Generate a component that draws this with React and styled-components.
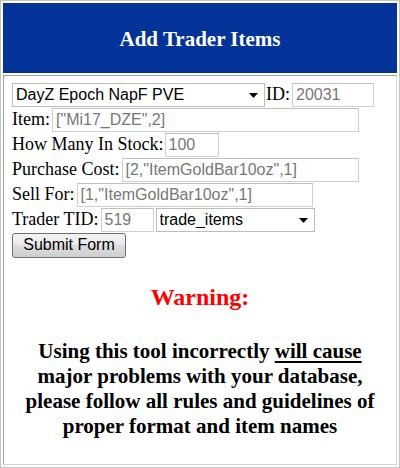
import React from 'react';
import styled, { createGlobalStyle } from 'styled-components';

const GlobalStyle = createGlobalStyle`
  html, body {
    margin: 0;
    padding: 0;
    background: #fff;
  }
  body {
    font-family: 'Liberation Serif', 'Times New Roman', serif;
  }
`;

const Table = styled('div')`
  width: 400px;
  height: 468px;
  box-sizing: border-box;
  border: 1px solid #c4c4c4;
  padding: 2px;
  display: flex;
  flex-direction: column;
  gap: 2px;
`;

const HeaderCell = styled('div')`
  height: 70px;
  background: #033399;
  color: #fff;
  display: flex;
  align-items: center;
  justify-content: center;
  font-weight: bold;
  font-size: 21px;
  padding-top: 3px;
  box-sizing: border-box;
`;

const BodyCell = styled('div')`
  flex: 1;
  border: 1px solid #9c9c9c;
  border-right-color: #d4d4d4;
  border-bottom-color: #d4d4d4;
  padding: 6px 8px 0 8px;
  display: flex;
  flex-direction: column;
`;

const Row = styled('div')`
  height: 25px;
  display: flex;
  align-items: center;
  font-size: 18px;
  color: #000;
  white-space: nowrap;
`;

const Label = styled('span')`
  margin-right: ${(p) => p.gap || 2}px;
`;

const Input = styled('input')`
  width: ${(p) => p.w}px;
  height: 24px;
  box-sizing: border-box;
  border: 1px solid #d0d0d0;
  border-top-color: #c0c0c0;
  padding: 0 3px;
  margin: 0;
  font-family: 'Liberation Sans', Arial, sans-serif;
  font-size: 16px;
  color: #000;
  background: #fff;
  outline: none;

  &::placeholder {
    color: #777;
    opacity: 1;
  }
`;

const SelectWrap = styled('div')`
  position: relative;
  width: ${(p) => p.w}px;
  height: 24px;
  margin-right: ${(p) => p.mr || 0}px;

  svg {
    position: absolute;
    right: 7px;
    top: 10px;
    pointer-events: none;
  }
`;

const Select = styled('select')`
  appearance: none;
  -webkit-appearance: none;
  width: 100%;
  height: 100%;
  box-sizing: border-box;
  border: 1px solid #bdbdbd;
  border-radius: 0;
  background: #fff;
  padding: 0 3px;
  margin: 0;
  font-family: 'Liberation Sans', Arial, sans-serif;
  font-size: 16px;
  color: #000;
  outline: none;
`;

const Button = styled('button')`
  width: 114px;
  height: 25px;
  margin-top: 1px;
  box-sizing: border-box;
  border: 1px solid #707070;
  border-radius: 3px;
  background: linear-gradient(#f2f2f2 0%, #ebebeb 45%, #dddddd 50%, #cfcfcf 100%);
  font-family: 'Liberation Sans', Arial, sans-serif;
  font-size: 16px;
  color: #000;
  padding: 0;
`;

const Warning = styled('div')`
  margin-top: 26px;
  text-align: center;
  color: #f00;
  font-weight: bold;
  font-size: 24px;
  line-height: 28px;
`;

const Notice = styled('div')`
  margin-top: 28px;
  text-align: center;
  font-weight: bold;
  font-size: 21px;
  line-height: 25px;
  color: #000;

  u {
    text-decoration-thickness: 2px;
    text-underline-offset: 3px;
  }
`;

const Arrow = () => (
  <svg width="9" height="5" viewBox="0 0 9 5">
    <path d="M0 0 H9 L4.5 5 Z" fill="#000" />
  </svg>
);

export default function App() {
  return (
    <>
      <GlobalStyle />
      <Table>
        <HeaderCell>Add Trader Items</HeaderCell>
        <BodyCell>
          <Row>
            <SelectWrap w={253} mr={1}>
              <Select defaultValue="napf">
                <option value="napf">DayZ Epoch NapF PVE</option>
              </Select>
              <Arrow />
            </SelectWrap>
            <Label gap={2}>ID:</Label>
            <Input w={82} placeholder="20031" />
          </Row>
          <Row>
            <Label gap={2}>Item:</Label>
            <Input w={307} placeholder={'["Mi17_DZE",2]'} />
          </Row>
          <Row>
            <Label gap={1}>How Many In Stock:</Label>
            <Input w={54} placeholder="100" />
          </Row>
          <Row>
            <Label gap={2}>Purchase Cost:</Label>
            <Input w={237} placeholder={'[2,"ItemGoldBar10oz",1]'} />
          </Row>
          <Row>
            <Label gap={2}>Sell For:</Label>
            <Input w={236} placeholder={'[1,"ItemGoldBar10oz",1]'} />
          </Row>
          <Row>
            <Label gap={2}>Trader TID:</Label>
            <Input w={53} placeholder="519" />
            <SelectWrap w={159} style={{ marginLeft: 2 }}>
              <Select defaultValue="trade_items">
                <option value="trade_items">trade_items</option>
              </Select>
              <Arrow />
            </SelectWrap>
          </Row>
          <Row>
            <Button type="button">Submit Form</Button>
          </Row>
          <Warning>Warning:</Warning>
          <Notice>
            Using this tool incorrectly <u>will cause</u> major problems with your
            database, please follow all rules and guidelines of proper format and
            item names
          </Notice>
        </BodyCell>
      </Table>
    </>
  );
}
